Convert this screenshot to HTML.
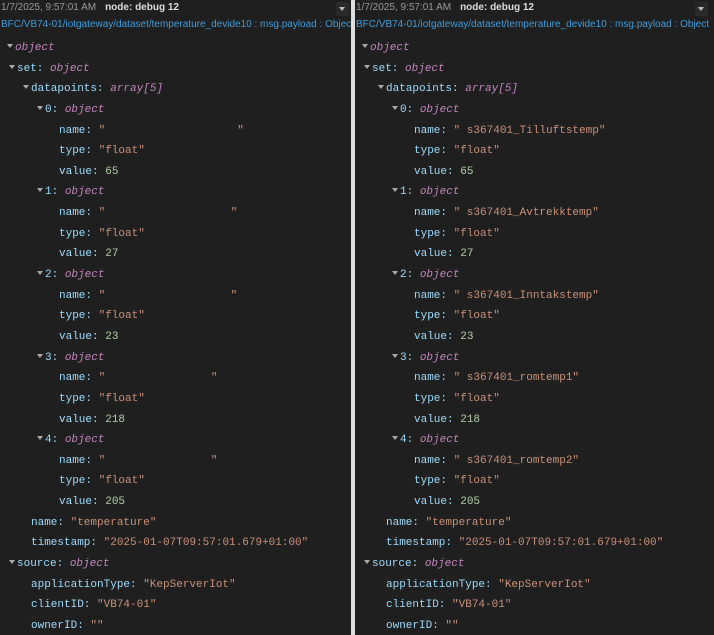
<!DOCTYPE html>
<html><head><meta charset="utf-8"><style>
html,body{margin:0;padding:0;background:#1e1e1e;width:714px;height:635px;overflow:hidden}
.p{position:absolute;top:0;height:635px;background:#1f1f1f;overflow:hidden}
.hd{position:absolute;top:2px;left:1px;font:10px "Liberation Sans",sans-serif;color:#9a9a9a;white-space:nowrap}
.hd b{color:#ddd;font-weight:bold;margin-left:9px}
.btn{position:absolute;top:2px;width:13px;height:14px;background:#2a2a2a;border-radius:2px}
.btn:after{content:"";position:absolute;left:3px;top:5px;border-left:3.5px solid transparent;border-right:3.5px solid transparent;border-top:4px solid #bbb}
.tp{position:absolute;top:19px;left:1px;font:10px "Liberation Sans",sans-serif;color:#3d9ee0;white-space:nowrap}
.l{position:absolute;font:11px "Liberation Mono",monospace;white-space:pre;color:#9cdcfe;line-height:14px}
.k{color:#9cdcfe}.s{color:#ce9178}.n{color:#b5cea8}.o{color:#c586c0;font-style:italic}
.a{display:inline-block;width:0;height:0;border-left:3.5px solid transparent;border-right:3.5px solid transparent;border-top:4px solid #aaa;margin-right:2px;vertical-align:2px}
.div{position:absolute;left:351px;top:0;width:4px;height:635px;background:#dedede}
</style></head><body>
<div class="p" style="left:0;width:351px" id="L"></div>
<div class="div"></div>
<div class="p" style="left:355px;width:359px" id="R"></div>
<script>
function build(id,names){
var lines=[
[7,1,'<span class="o">object</span>'],
[9,1,'set: <span class="o">object</span>'],
[23,1,'datapoints: <span class="o">array[5]</span>']];
var vals=[65,27,23,218,205];
for(var i=0;i<5;i++){
lines.push([37,1,i+': <span class="o">object</span>']);
lines.push([59,0,'name: <span class="s">"'+names[i]+'"</span>']);
lines.push([59,0,'type: <span class="s">"float"</span>']);
lines.push([59,0,'value: <span class="n">'+vals[i]+'</span>']);
}
lines.push([31,0,'name: <span class="s">"temperature"</span>']);
lines.push([31,0,'timestamp: <span class="s">"2025-01-07T09:57:01.679+01:00"</span>']);
lines.push([9,1,'source: <span class="o">object</span>']);
lines.push([31,0,'applicationType: <span class="s">"KepServerIot"</span>']);
lines.push([31,0,'clientID: <span class="s">"VB74-01"</span>']);
lines.push([31,0,'ownerID: <span class="s">""</span>']);
var h='<div class="hd">1/7/2025, 9:57:01 AM<b>node: debug 12</b></div><div class="btn" style="left:'+(id=='L'?336:340)+'px"></div><div class="tp">BFC/VB74-01/iotgateway/dataset/temperature_devide10 : msg.payload : Object</div>';
for(var j=0;j<lines.length;j++){
var y=Math.round(41+j*20.64);var L=lines[j];
h+='<div class="l" style="top:'+y+'px;left:'+L[0]+'px">'+(L[1]?'<span class="a"></span>':'')+L[2]+'</div>';
}
document.getElementById(id).innerHTML=h;
}
build('L',['                    ','                   ','                   ','                ','                ']);
build('R',[' s367401_Tilluftstemp',' s367401_Avtrekktemp',' s367401_Inntakstemp',' s367401_romtemp1',' s367401_romtemp2']);
</script>
</body></html>
